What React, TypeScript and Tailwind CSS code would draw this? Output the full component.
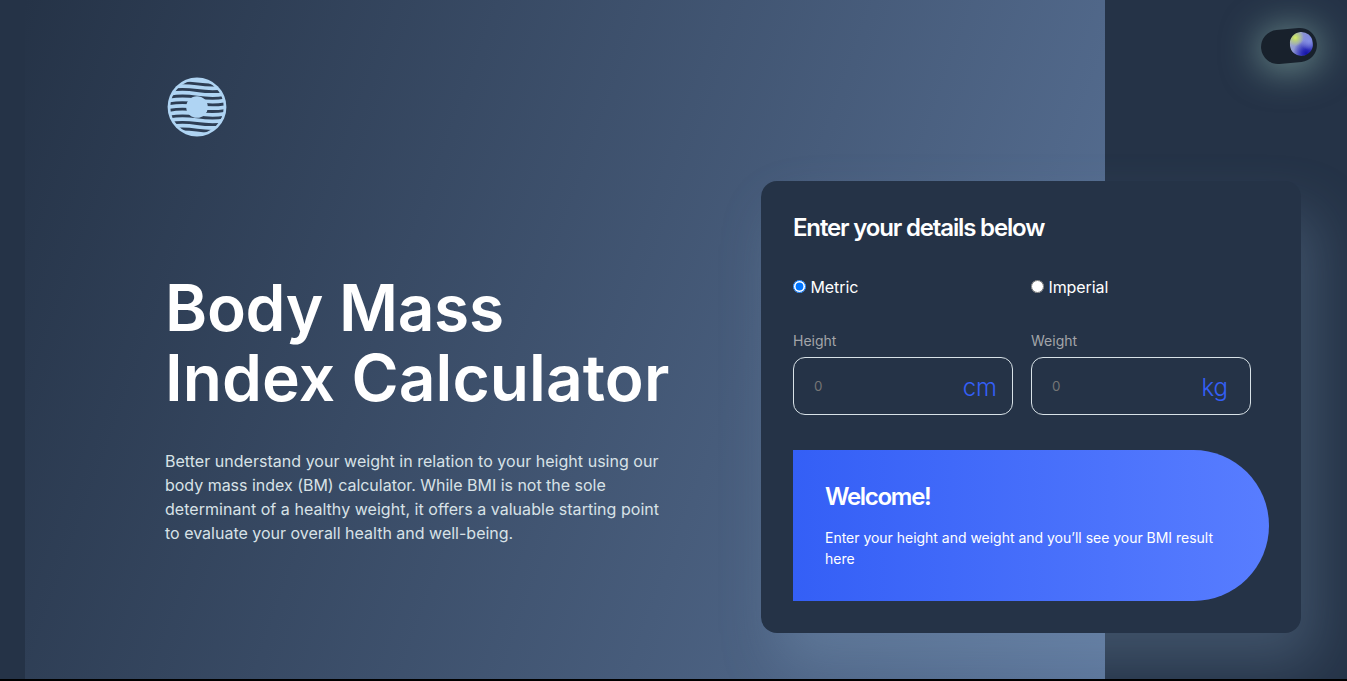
import { useState } from "react";

const bands = [8.9, 15.5, 22.1, 28.7, 35.3, 41.9, 48.5, 55.1];

function Logo() {
  return (
    <svg className="block size-16" viewBox="0 0 64 64">
      <defs>
        <clipPath id="disc">
          <circle cx="32" cy="32" r="26.7" />
        </clipPath>
        <mask id="waves">
          <rect width="64" height="64" fill="#fff" />
          <g clipPath="url(#disc)" fill="none" stroke="#000" strokeWidth="2.8">
            {bands.map((y) => (
              <path key={y} transform={`translate(0 ${y})`} d="M2 .6C12 -1.800 22 -1.400 32 0S52 2 62 -.3" />
            ))}
          </g>
          <circle cx="32" cy="32" r="10.8" fill="#fff" />
        </mask>
      </defs>
      <circle cx="32" cy="32" r="29.4" fill="#afd4f3" mask="url(#waves)" />
    </svg>
  );
}

function ThemeSwitch() {
  return (
    <button
      aria-label="Toggle theme"
      className="absolute left-[1261px] top-[29px] flex h-[34px] w-[56px] -rotate-5 items-center justify-end rounded-full bg-[#18212c] pr-[4.5px] shadow-[0_3px_36px_4px_rgba(160,205,190,0.55)]"
    >
      <span className="mb-[2px] block h-6 w-[23px] rounded-full bg-[radial-gradient(circle_at_26%_22%,#d6f065_0%,#b9cf80_12%,transparent_34%),radial-gradient(circle_at_84%_40%,#8590e6_0%,transparent_38%),radial-gradient(circle_at_68%_92%,#1414a8_0%,#2b2cb8_16%,transparent_50%),linear-gradient(120deg,#a0aad0_15%,#7f86d4_60%,#4a50cc_100%)]" />
    </button>
  );
}

function Unit({ label, checked, onSelect }: { label: string; checked: boolean; onSelect: () => void }) {
  return (
    <label className="flex w-[238px] items-center gap-[4.4px] text-base leading-6 tracking-[-0.06px] text-white">
      <input type="radio" name="unit" checked={checked} onChange={onSelect} className="mb-[2px] size-[13px]" />
      {label}
    </label>
  );
}

function Field({ label, unit, inset }: { label: string; unit: string; inset: string }) {
  return (
    <label className="block w-[220px]">
      <span className="block text-sm leading-[21px] text-[#a3a5a9]">{label}</span>
      <span className={"mt-[6px] flex h-[58px] items-center rounded-xl border border-[#d8e2e7] pl-5 " + inset}>
        <input placeholder="0" className="w-0 flex-1 bg-transparent pt-px text-[13.333px] text-white outline-none placeholder:text-[#757575]" />
        <span className="pt-[3px] text-2xl font-[350] text-[#345ff6]">{unit}</span>
      </span>
    </label>
  );
}

export default function App() {
  const [metric, setMetric] = useState(true);
  return (
    <div className="relative flex h-[681px] w-full overflow-hidden border-b-2 border-black bg-[#253347] pl-[25px] font-['Inter',sans-serif]">
      <main className="flex h-[679px] w-[1080px] shrink-0 bg-[linear-gradient(110deg,#253347_0%,#5a7398_100%)] pl-[140px]">
        <section className="w-[596px] shrink-0 pt-[75px]">
          <Logo />
          <h1 className="mt-[134px] whitespace-nowrap text-[64px] font-semibold leading-[70.4px] text-white">
            <span className="tracking-[-0.3px]">Body Mass</span>
            <br />
            <span className="tracking-[0.1px]">Index Calculator</span>
          </h1>
          <p className="mt-[35px] w-[510px] whitespace-nowrap text-base leading-6 text-[#d8e2e7]">
            <span className="tracking-[0.03px]">Better understand your weight in relation to your height using our</span>
            <br />
            <span className="tracking-[-0.02px]">body mass index (BM) calculator. While BMI is not the sole</span>
            <br />
            <span className="tracking-[0.035px]">determinant of a healthy weight, it offers a valuable starting point</span>
            <br />
            to evaluate your overall health and well-being.
          </p>
        </section>
        <section className="mt-[181px] h-[452px] w-[540px] shrink-0 rounded-2xl bg-[#253347] p-8 shadow-[16px_32px_56px_rgba(143,174,207,0.25)]">
          <h2 className="text-2xl font-semibold leading-[29px] tracking-[-1.16px] text-white">Enter your details below</h2>
          <div className="mt-[33px] flex">
            <Unit label="Metric" checked={metric} onSelect={() => setMetric(true)} />
            <Unit label="Imperial" checked={!metric} onSelect={() => setMetric(false)} />
          </div>
          <div className="mt-[31px] flex gap-[18px]">
            <Field label="Height" unit={metric ? "cm" : "ft"} inset="pr-[15px]" />
            <Field label="Weight" unit={metric ? "kg" : "lb"} inset="pr-[22px]" />
          </div>
          <div className="mt-[35px] h-[151px] w-[476px] rounded-r-full bg-[linear-gradient(90deg,#345ff6_0%,#587dff_100%)] p-8 text-white">
            <h3 className="text-2xl font-semibold leading-[29px] tracking-[-1.3px]">Welcome!</h3>
            <p className="mt-4 text-sm leading-[21px] tracking-[-0.02px]">
              Enter your height and weight and you’ll see your BMI result
              <br />
              here
            </p>
          </div>
        </section>
      </main>
      <ThemeSwitch />
    </div>
  );
}
